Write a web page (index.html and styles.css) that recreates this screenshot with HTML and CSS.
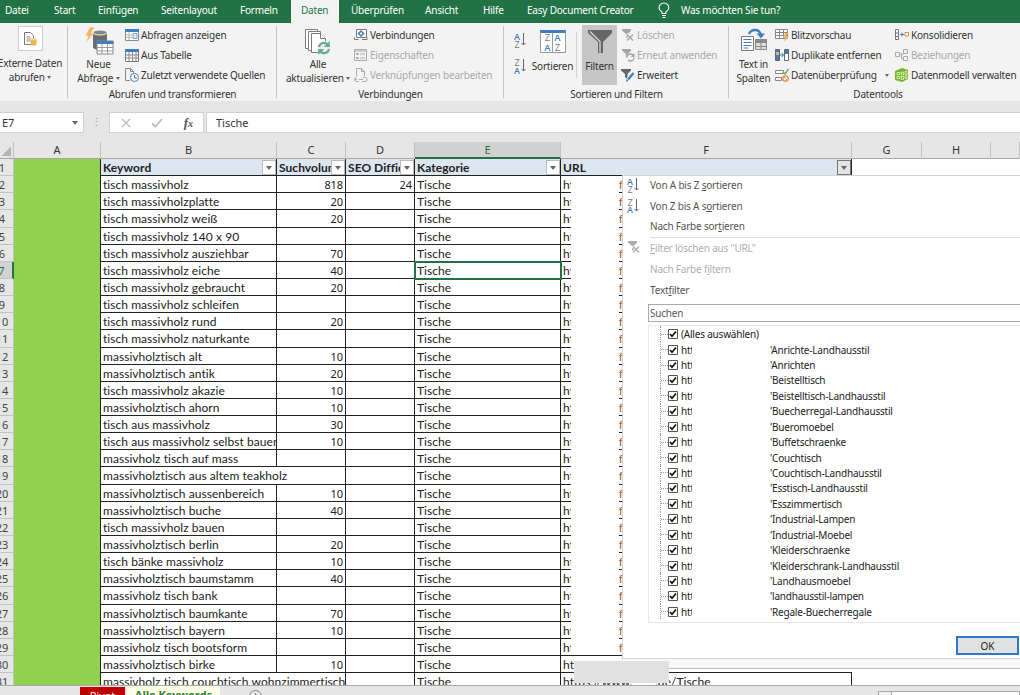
FILE: index.html
```html
<!DOCTYPE html>
<html lang="de">
<head>
    <meta charset="UTF-8">
    <meta name="viewport" content="width=device-width, initial-scale=1.0">
    <title>Alle Keywords</title>
    <link rel="stylesheet" href="styles.css">
</head>
<body>
    <nav class="tabs">
        <span>Datei</span>
        <span>Start</span>
        <span>Einfügen</span>
        <span>Seitenlayout</span>
        <span>Formeln</span>
        <span class="active">Daten</span>
        <span>Überprüfen</span>
        <span>Ansicht</span>
        <span>Hilfe</span>
        <span class="wide">Easy Document Creator</span>
        <svg width="12" height="17" viewBox="0 0 12 17" fill="none" stroke="#fff" stroke-width="1.1"><path d="M4 11.5V10C2 8.800 1 7.500 1 5.700a4.900 4.700 0 0 1 9.800 0C10.800 7.500 9.800 8.800 7.800 10v1.500zM4 13.500h4M4.500 15.500h3"/></svg>
        <span class="tell">Was möchten Sie tun?</span>
    </nav>

    <div class="ribbon">
        <section class="group g-extern">
            <div class="group-body">
                <div class="big">
                    <div class="framed"><svg width="13" height="14" viewBox="0 0 13 14"><path d="M.5.5h6l3 3v9h-9z" fill="#fff" stroke="#777"/><path d="M2.500 5h4M2.500 7h4M2.500 9h4" stroke="#888"/><path d="M6.500 7v5c0 2 6 2 6 0V7z" fill="#eeb45c"/><ellipse cx="9.500" cy="7" rx="3" ry="1.300" fill="#f7d49b"/></svg></div>
                    <div class="cap">Externe Daten<br>abrufen <i class="arrow"></i></div>
                </div>
            </div>
        </section>

        <section class="group g-abrufen">
            <div class="group-body">
                <div class="big">
                    <svg width="30" height="30" viewBox="0 0 30 30"><path d="M9 6v14c0 4 14 4 14 0V6z" fill="#6d6d6d"/><ellipse cx="16" cy="5.500" rx="7" ry="2.500" fill="#858585" stroke="#f3f3f3"/><path d="M6 0h5L7 6h3L2 16l2-7H1z" fill="#f0b765" stroke="#f3f3f3" stroke-width=".6"/><path d="M13 14h16v13H13z" fill="#fff" stroke="#8a8a8a"/><path d="M12.500 14h17v3h-17z" fill="#3f7fc1"/><path d="M13 20.500h16M13 24h16M18 17v10M23.500 17v10" stroke="#999"/></svg>
                    <div class="cap">Neue<br>Abfrage <i class="arrow"></i></div>
                </div>
                <ul class="smalls">
                    <li><svg width="14" height="14" viewBox="0 0 14 14"><path d="M.5 1.500h13v11H.5z" fill="#fff" stroke="#8a8a8a"/><path d="M0 1h14v3H0z" fill="#3f7fc1"/><path d="M1 7h6M1 9.500h6M4 4v8" stroke="#b5b5b5"/><path d="M8 5.500h4v5H8z" fill="#dce9f6" stroke="#7fa5cc"/></svg>Abfragen anzeigen</li>
                    <li><svg width="14" height="14" viewBox="0 0 14 14"><path d="M.5 1.500h13v12H.5z" fill="#fff" stroke="#777"/><path d="M0 1h14v3H0z" fill="#3f7fc1"/><path d="M1 7h12M1 10h12M4 4v9M7.500 4v9M11 4v9" stroke="#888"/></svg>Aus Tabelle</li>
                    <li><svg width="14" height="14" viewBox="0 0 14 14"><path d="M.5 12.500V.5h5l3 3V6M.5 12.500H5M5.500.5v3h3" fill="none" stroke="#888"/><circle cx="9.500" cy="9.500" r="4" fill="#fff" stroke="#3f7fc1"/><path d="M9.500 7v3H12" fill="none" stroke="#666"/></svg>Zuletzt verwendete Quellen</li>
                </ul>
            </div>
            <h2>Abrufen und transformieren</h2>
        </section>

        <section class="group g-verb">
            <div class="group-body">
                <div class="big">
                    <svg width="28" height="28" viewBox="0 0 28 28"><g fill="#fff" stroke="#7b7b7b"><path d="M1.500 20.500v-19h12v19z"/><path d="M4.500 22.500v-19h12v19z"/><path d="M7.500 24.500v-19h9l5 5v14z"/><path d="M16.500 5.500v5h5"/></g><circle cx="20" cy="20" r="7" fill="#f3f3f3"/><path d="M15 19a5 5 0 0 1 9-2M25 21a5 5 0 0 1-9 2" fill="none" stroke="#63ac8b" stroke-width="2.200"/><path d="M25.800 13v6h-6zM14.200 27v-6h6z" fill="#63ac8b"/></svg>
                    <div class="cap">Alle<br>aktualisieren <i class="arrow"></i></div>
                </div>
                <ul class="smalls">
                    <li><svg width="14" height="14" viewBox="0 0 14 14"><path d="M2.500 1.500h10v8h-10zM.5 9.500v2h4M8 11.500h5v-2" fill="#fff" stroke="#777"/><path d="M7 3l2.500 2.500L7 8 4.500 5.500z" fill="none" stroke="#3f7fc1" stroke-width="1.500"/></svg>Verbindungen</li>
                    <li class="off"><svg width="14" height="14" viewBox="0 0 14 14" fill="none" stroke="#aaa"><path d="M.5 1.500h12v11H.5zM1 3h11M2.500 5.500h2v1h-2zM2.500 9.500h2v1h-2zM6 6h5M6 10h5"/></svg>Eigenschaften</li>
                    <li class="off"><svg width="14" height="14" viewBox="0 0 14 14" fill="none" stroke="#aaa"><path d="M2.500 8V.5h5l3 3V8M7.500.5v3h3M1 11.500h2m2 0h4m-6-2H2.500a2 2 0 0 0 0 4H5m4-4h2a2 2 0 0 1 0 4H8"/></svg>Verknüpfungen bearbeiten</li>
                </ul>
            </div>
            <h2>Verbindungen</h2>
        </section>

        <section class="group g-sort">
            <div class="group-body">
                <div class="az">
                    <div class="az-icon"><span><b>A</b>Z</span><svg width="5" height="14" viewBox="0 0 5 14" fill="none" stroke="#666"><path d="M2.500 0v12M.5 10l2 2 2-2"/></svg></div>
                    <div class="az-icon"><span>Z<b>A</b></span><svg width="5" height="14" viewBox="0 0 5 14" fill="none" stroke="#666"><path d="M2.500 0v12M.5 10l2 2 2-2"/></svg></div>
                </div>
                <div class="big sort">
                    <div class="sort-icon"><span>Z<b>A</b></span><span><b>A</b>Z</span></div>
                    <div class="cap">Sortieren</div>
                </div>
                <div class="big filter">
                    <svg width="26" height="26" viewBox="0 0 26 26"><path d="M1 1h24v3l-9 9v11h-5V13L1 4z" fill="#666"/><path d="M3 2.500l10 10v11" fill="none" stroke="#d8d8d8" stroke-width="1.300"/></svg>
                    <div class="cap">Filtern</div>
                </div>
                <ul class="smalls">
                    <li class="off"><svg width="14" height="14" viewBox="0 0 14 14"><path d="M1 1h9v1.500L7 6v5L5 9V6L1 2.500z" fill="#a5a5a5"/><path d="M5.500 6l7 6.500M12.500 6l-7 6.500" stroke="#f3f3f3" stroke-width="3"/><path d="M6 6.500l6 6M12 6.500l-6 6" stroke="#a5a5a5" stroke-width="1.300"/></svg>Löschen</li>
                    <li class="off"><svg width="14" height="14" viewBox="0 0 14 14"><path d="M1 1h9v1.500L7 6v5L5 9V6L1 2.500z" fill="#a5a5a5"/><circle cx="9.500" cy="9.500" r="3.500" fill="#f3f3f3" stroke="#a5a5a5" stroke-width="1.300" stroke-dasharray="8 3"/><path d="M13.500 5v4h-4z" fill="#a5a5a5"/></svg>Erneut anwenden</li>
                    <li><svg width="14" height="14" viewBox="0 0 14 14"><path d="M0 1h10v1.500L6.500 6v6L4 9V6L0 2.500z" fill="#666"/><path d="M13 4.500L6.500 12" stroke="#f3f3f3" stroke-width="4"/><path d="M12.500 5L7 11.500" stroke="#3f7fc1" stroke-width="2.400"/><path d="M5 14l.5-3 2 1.700z" fill="#3f7fc1"/></svg>Erweitert</li>
                </ul>
            </div>
            <h2>Sortieren und Filtern</h2>
        </section>

        <section class="group g-tools">
            <div class="group-body">
                <div class="big">
                    <svg width="28" height="24" viewBox="0 0 28 24"><path d="M1.500 8.500h12v14h-12z" fill="#fff" stroke="#777"/><path d="M3.500 11.500h8M3.500 14.500h8M3.500 17.500h8M3.500 20h5" stroke="#3f7fc1"/><path d="M15.500 11.500h11v10h-11z" fill="#ddd" stroke="#888"/><path d="M15 11h12v4H15z" fill="#8a8a8a"/><path d="M15 18.500h11M21 15v7" stroke="#888"/><path d="M9 6c2-5 10-6 12 1" fill="none" stroke="#3f7fc1" stroke-width="2.300"/><path d="M16.500 5.500h8.500L21 10.500z" fill="#3f7fc1"/></svg>
                    <div class="cap">Text in<br>Spalten</div>
                </div>
                <ul class="smalls first">
                    <li><svg width="14" height="14" viewBox="0 0 14 14"><path d="M.5 1.500h12v9H.5zM1 4.500h11M1 7.500h11M4.500 2v8M8.500 2v8" fill="#fff" stroke="#888"/><path d="M10 5h3l-2 3h3l-5 6 1-4H8z" fill="#f0b765"/></svg>Blitzvorschau</li>
                    <li><svg width="14" height="14" viewBox="0 0 14 14"><path d="M.5 1.500h4v11h-4z" fill="#3f7fc1" stroke="#666"/><path d="M1 4h3v3H1z" fill="#e7b065"/><path d="M9.500 1.500h4v11h-4z" fill="#fff" stroke="#666"/><path d="M10 2h3v4h-3z" fill="#3f7fc1"/><path d="M4.500 7h4M7 5l1.500 2L7 9" fill="none" stroke="#3f7fc1"/></svg>Duplikate entfernen</li>
                    <li><svg width="14" height="14" viewBox="0 0 14 14"><path d="M.5 2.500h8v3h-8zM.5 9.500h6v3h-6z" fill="#fff" stroke="#888"/><path d="M8 4l2 2 3.500-5" fill="none" stroke="#63ac8b" stroke-width="1.500"/><circle cx="10.500" cy="10.500" r="2.700" fill="#fff" stroke="#e08b3c" stroke-width="1.300"/><path d="M8.500 8.500l4 4" stroke="#e08b3c"/></svg>Datenüberprüfung<i class="arrow far"></i></li>
                </ul>
                <ul class="smalls">
                    <li><svg width="14" height="14" viewBox="0 0 14 14"><path d="M.5 1.500h3v10h-3zM.5 5h3M.5 8.500h3" fill="#fff" stroke="#777"/><path d="M5 6.500h4M7 4.500v4" stroke="#3f7fc1"/><path d="M10 4.500h3.500v3.500H10z" fill="#fff" stroke="#e08b3c"/></svg>Konsolidieren</li>
                    <li class="off"><svg width="14" height="14" viewBox="0 0 14 14" fill="none" stroke="#aaa"><path d="M.5 4.500h4v4h-4zM8.500 1.500h4v4h-4zM8.500 8.500h4v4h-4zM5 6h3.500M6.500 6v5h2"/></svg>Beziehungen</li>
                    <li><svg width="14" height="14" viewBox="0 0 14 14"><path d="M0 3l7-3 6 2v9l-6 3-7-2z" fill="#76b82a"/><path d="M2 4.500h3v2H2zM6.500 4h2v3h-2zM10 3.500h2v3h-2zM2 8.500h3v2H2zM6.500 8.500h2v3h-2zM10 8h2v2.500h-2z" fill="none" stroke="#e5f4d1" stroke-width=".8"/></svg>Datenmodell verwalten</li>
                </ul>
            </div>
            <h2>Datentools</h2>
        </section>
    </div>

    <div class="formula">
        <div class="namebox">E7<i class="arrow"></i></div>
        <div class="dots">⋮</div>
        <div class="fx">
            <svg width="10" height="10" viewBox="0 0 10 10" stroke="#bbb" stroke-width="1.300"><path d="M1 1l8 8M9 1L1 9"/></svg>
            <svg width="12" height="10" viewBox="0 0 12 10" fill="none" stroke="#bbb" stroke-width="1.800"><path d="M1 5.500l3.500 3L11 1"/></svg>
            <em>f<small>x</small></em>
        </div>
        <div class="value">Tische</div>
    </div>

    <div class="colheads">
        <span class="corner"></span>
        <span>A</span><span>B</span><span>C</span><span>D</span><span class="sel">E</span><span>F</span><span>G</span><span>H</span><span></span>
    </div>

    <main class="sheet">
        <div class="rows" id="rows"></div>
        <div class="patch"></div>
        <div class="patch grey"></div>

        <div class="menu">
            <ul class="commands">
                <li><div class="az-icon"><span><b>A</b>Z</span><svg width="5" height="14" viewBox="0 0 5 14" fill="none" stroke="#666"><path d="M2.500 0v12M.5 10l2 2 2-2"/></svg></div><p>Von A bis Z <u>s</u>ortieren</p></li>
                <li><div class="az-icon"><span>Z<b>A</b></span><svg width="5" height="14" viewBox="0 0 5 14" fill="none" stroke="#666"><path d="M2.500 0v12M.5 10l2 2 2-2"/></svg></div><p>Von Z bis A s<u>o</u>rtieren</p></li>
                <li><i></i><p>Nach Farbe sor<u>t</u>ieren</p></li>
                <li class="off line"><svg width="14" height="14" viewBox="0 0 14 14"><path d="M1 1h9v1.500L7 6v6L5 10V6L1 2.500z" fill="#aaa"/><path d="M5.500 6l7 6.500M12.500 6l-7 6.500" stroke="#fff" stroke-width="3"/><path d="M6 6.500l6 6M12 6.500l-6 6" stroke="#aaa" stroke-width="1.300"/></svg><p><u>F</u>ilter löschen aus "URL"</p></li>
                <li class="off"><i></i><p>Nach Farbe f<u>i</u>ltern</p></li>
                <li><i></i><p>Text<u>f</u>ilter</p></li>
            </ul>
            <div class="search">Suchen</div>
            <div class="tree" id="tree"></div>
            <button class="ok">OK</button>
        </div>
    </main>

    <footer class="sheets">
        <span class="pivot">Pivot</span>
        <span class="current">Alle Keywords</span>
        <svg class="plus" width="13" height="13" viewBox="0 0 13 13" fill="none" stroke="#888"><circle cx="6.500" cy="6.500" r="6"/><path d="M6.500 3v7M3 6.500h7"/></svg>
        <span class="scroll"></span>
    </footer>

    <script src="script.js"></script>
</body>
</html>
```
FILE: styles.css
```css
* {
    margin: 0;
    padding: 0;
    box-sizing: border-box;
}

body {
    width: 1020px;
    height: 695px;
    overflow: hidden;
    display: flex;
    flex-direction: column;
    background: #e6e6e6;
    color: #333;
    font: 10px/14px "Noto Sans", "Open Sans", sans-serif;
    letter-spacing: -0.2px;
    white-space: nowrap;
}

ul {
    list-style: none;
}

svg {
    display: block;
    flex: none;
}

/* tabs */
.tabs {
    height: 23px;
    flex: none;
    display: grid;
    grid-template-columns: 49px 44px 63px 79px 56px 48px 74px 58px 44px 136px 25px 1fr;
    line-height: 20px;
    background: #217346;
    color: #fff;
}

.tabs span {
    padding-left: 5px;
}

.tabs .active {
    padding-left: 10px;
    background: #f3f3f3;
    color: #217346;
}

.tabs span.active ~ span {
    padding-left: 12px;
}

.tabs svg {
    margin: 2px 0 0 7px;
}

.tabs span.active ~ .tell {
    padding-left: 5px;
}

/* ribbon */
.ribbon {
    height: 78px;
    flex: none;
    display: flex;
    background: #f3f3f3;
}

.group {
    position: relative;
    flex: none;
    display: flex;
    flex-direction: column;
    height: 78px;
}

.group::after {
    content: "";
    position: absolute;
    right: 0;
    top: 3px;
    width: 1px;
    height: 72px;
    background: #c6c6c6;
}

.g-extern { width: 68px; }
.g-abrufen { width: 209px; }
.g-verb { width: 227px; }
.g-sort { width: 225px; }
.g-tools { width: 298px; }

.g-tools::after {
    display: none;
}

.group-body {
    height: 64px;
    flex: none;
    display: flex;
    padding-top: 2px;
}

.group h2 {
    font-size: 10px;
    font-weight: normal;
    line-height: 15px;
    text-align: center;
}

.big {
    flex: none;
    display: flex;
    flex-direction: column;
    align-items: center;
    height: 60px;
    padding-top: 3px;
    text-align: center;
}

.big .cap {
    margin-top: auto;
}

.g-extern .big { width: 60px; padding-top: 1px; }
.g-extern .cap { margin-bottom: 1px; }
.g-abrufen .big { width: 57px; padding-top: 2px; padding-left: 4px; }
.g-verb .big { width: 77px; padding-left: 5px; }
.g-tools .big { width: 46px; padding-left: 3px; }

.framed {
    width: 25px;
    height: 25px;
    display: grid;
    place-items: center;
    background: #fff;
    border: 1px solid #ccc;
}

.arrow {
    display: inline-block;
    vertical-align: 2px;
    border: 2.5px solid transparent;
    border-top: 3px solid #666;
    border-bottom: 0;
}

.smalls li {
    display: flex;
    align-items: center;
    gap: 2px;
    height: 20px;
    line-height: 20px;
}

.smalls .off {
    color: #a9a9a9;
}

.first {
    width: 120px;
}

.arrow.far {
    margin-left: 6px;
}

.az {
    width: 24px;
    padding: 8px 0 0 10px;
}

.az-icon {
    display: flex;
    gap: 1px;
    height: 26px;
    color: #777;
    font: 9px/7.500px "Open Sans", sans-serif;
    letter-spacing: 0;
}

.az-icon span,
.sort-icon span {
    width: 6px;
    display: flex;
    flex-direction: column;
    align-items: center;
}

.az-icon b,
.sort-icon b {
    font-weight: 600;
    color: #3f7fc1;
}

.big.sort {
    position: relative;
    width: 49px;
}

.big.sort::after {
    content: "";
    position: absolute;
    right: 0;
    top: 7px;
    width: 1px;
    height: 46px;
    background: #d5d5d5;
}

.sort-icon {
    display: flex;
    justify-content: space-evenly;
    width: 26px;
    height: 23px;
    margin-top: 2px;
    background: linear-gradient(#999, #999) 50% 0 / 1px 100% no-repeat #fff;
    border: 1px solid #999;
    border-top: 3px solid #3f7fc1;
    font: 9.500px/9.500px "Open Sans", sans-serif;
    letter-spacing: 0;
    color: #777;
}

.big.sort .cap,
.big.filter .cap {
    margin: auto 0 12px;
}

.big.filter {
    width: 35px;
    margin-left: 5px;
    padding-top: 4px;
    background: #c6c6c6;
}

.g-sort .smalls {
    margin-left: 4px;
}

/* formula bar */
.formula {
    height: 21px;
    flex: none;
    display: flex;
    margin-top: 11px;
    font-size: 11px;
    line-height: 19px;
    letter-spacing: 0;
}

.namebox,
.fx,
.value {
    display: flex;
    align-items: center;
    background: #fff;
    border: 1px solid #d0d0d0;
}

.namebox {
    width: 84px;
    padding: 0 5px 0 2px;
    border-left: 0;
    justify-content: space-between;
}

.namebox .arrow {
    border-width: 4px 3px 0;
}

.dots {
    width: 25px;
    text-align: center;
    color: #999;
}

.fx {
    width: 95px;
    justify-content: space-between;
    padding: 0 10px 0 11px;
}

.fx em {
    font: italic bold 13px "Liberation Serif", serif;
    color: #555;
}

.fx small {
    font-size: 10px;
}

.value {
    flex: 1;
    margin-left: 2px;
    padding-left: 9px;
    border-right: 0;
}

/* column heads */
.colheads,
.row {
    display: grid;
    grid-template-columns: 14px 87px 176px 69px 69px 146px 291px 70px 69px 29px;
}

.colheads {
    height: 17px;
    flex: none;
    margin-top: 9px;
    font-size: 11px;
    line-height: 16px;
    text-align: center;
    border-bottom: 1px solid #a6a6a6;
}

.colheads span {
    border-right: 1px solid #c2c2c2;
}

.colheads .corner {
    background: linear-gradient(135deg, transparent 50%, #b4b4b4 50%) 2px 5px / 9px 9px no-repeat;
}

.colheads .sel {
    height: 17px;
    background: #d2d2d2;
    color: #217346;
    border-bottom: 2px solid #217346;
}

/* sheet */
.sheet {
    position: relative;
    height: 526px;
    flex: none;
    overflow: hidden;
    background: #fff;
}

.rows {
    height: 531.3px;
    display: grid;
    grid-template-rows: repeat(31, minmax(0, 1fr));
    font: 12px/16px Lato, "Open Sans", sans-serif;
    letter-spacing: 0.05px;
    color: #222;
}

.row {
    grid-template-rows: 100%;
}

.row > span {
    min-width: 0;
    overflow: hidden;
    padding: 1px 2px 0;
    border-right: 1px solid #222;
    border-bottom: 1px solid #222;
}

.row > .num {
    margin-left: -9px;
    padding: 0;
    text-align: center;
    background: #e6e6e6;
    border-color: #c2c2c2;
    font: 11px/17px "Noto Sans", sans-serif;
    letter-spacing: 0;
    color: #444;
}

.row > .green {
    background: #92d050;
    border-bottom: 0;
}

.row > .right {
    text-align: right;
    font: 11px/16px "Noto Sans", sans-serif;
    letter-spacing: -0.1px;
}

.row > .spill {
    overflow: visible;
    border-right: 0;
}

.row > .url {
    border-right: 0;
    display: flex;
    justify-content: space-between;
    padding-right: 229px;
}

.row > .url b {
    font-weight: normal;
    color: #a0622d;
}

.row.last > .url {
    border-right: 1px solid #222;
    padding-right: 0;
}

.row.head > span {
    position: relative;
    font-weight: bold;
}

.row.head > .cell {
    background: #dce6f1;
}

.row.head > .num {
    font-weight: normal;
}

.row.head .url {
    border-right: 1px solid #222;
}

.drop {
    position: absolute;
    right: 0;
    top: 1px;
    width: 14px;
    height: 15px;
    display: grid;
    place-items: center;
    background: #fff;
    border: 1px solid #bbb;
}

.drop .arrow {
    border-width: 4px 3px 0;
}

.row.head .url .drop {
    background: #e4e4e4;
    border-color: #777;
}

.row.picked > .num {
    background: #d2d2d2;
    color: #217346;
    border-right: 2px solid #217346;
}

.row.picked > .kat {
    outline: 2px solid #217346;
    outline-offset: -1px;
    z-index: 1;
}

.patch {
    position: absolute;
    left: 571px;
    top: 18px;
    width: 48px;
    height: 477px;
    background: #fff;
}

.patch.grey {
    z-index: 2;
    left: 574px;
    top: 502px;
    width: 95px;
    height: 22px;
    background: #e1e1e1;
}

/* filter menu */
.menu {
    position: absolute;
    z-index: 1;
    left: 622px;
    top: 16px;
    width: 420px;
    height: 484px;
    padding: 0 0 0 25px;
    background: #fff;
    border: 1px solid #d4d4d4;
    box-shadow: 0 9px 0 #f7f7f7, 0 10px 0 #bbb;
    color: #555;
}

.commands {
    margin: -1px 0 0 -25px;
}

.commands li {
    display: grid;
    grid-template-columns: 27px 1fr;
    height: 20.6px;
    line-height: 20px;
}

.commands li > svg,
.commands .az-icon {
    margin: 3px 0 0 4px;
}

.commands .az-icon {
    height: 14px;
}

.commands .line p {
    border-top: 1px solid #e1e1e1;
    line-height: 21px;
}

.commands .line {
    height: 22.5px;
}

.commands .off {
    color: #aeaeae;
}

.commands u {
    text-underline-offset: 1px;
}

.search {
    height: 18px;
    margin-top: 4px;
    padding-left: 1px;
    line-height: 17px;
    border: 1px solid #aaa;
}

.tree {
    height: 298px;
    margin-top: 3px;
    padding-left: 11px;
    border: 1px solid #e8e8e8;
    color: #222;
}

.node {
    display: flex;
    align-items: center;
    height: 15.430px;
    border-left: 1px dotted #999;
}

.node::before {
    content: "";
    width: 7px;
    border-top: 1px dotted #999;
}

.node svg {
    margin-right: 3px;
}

.node span {
    width: 11px;
    overflow: hidden;
    margin-right: 78px;
}

.ok {
    display: block;
    width: 63px;
    height: 19px;
    margin: 13px 0 0 308px;
    background: #e1e1e1;
    border: 2px solid #2f78c4;
    font: inherit;
    color: #222;
}

/* sheet tabs */
.sheets {
    height: 10px;
    display: flex;
    overflow: hidden;
    padding-left: 80px;
    border-top: 1px solid #aaa;
    font: bold 11px/18px "Open Sans", sans-serif;
    letter-spacing: 0;
}

.pivot {
    width: 45px;
    height: 18px;
    margin-top: 1px;
    text-align: center;
    background: #c00000;
    color: #fff;
    font-weight: normal;
}

.current {
    width: 93px;
    margin-left: 2px;
    text-align: center;
    background: #ffffe5;
    color: #2b7d34;
}

.plus {
    margin: 4px 0 0 29px;
}

.scroll {
    height: 12px;
    margin: 5px 0 0 616px;
    width: 142px;
    flex: none;
    background: linear-gradient(90deg, #f3f3f3 12px, #aaa 12px, #aaa 13px, #fff 13px);
    border: 1px solid #aaa;
}
```
FILE: script.js
```js
// keyword, search volume, seo difficulty
const keywords = [
    ["tisch massivholz", 818, 24],
    ["tisch massivholzplatte", 20],
    ["tisch massivholz weiß", 20],
    ["tisch massivholz 140 x 90"],
    ["tisch massivholz ausziehbar", 70],
    ["tisch massivholz eiche", 40],
    ["tisch massivholz gebraucht", 20],
    ["tisch massivholz schleifen"],
    ["tisch massivholz rund", 20],
    ["tisch massivholz naturkante"],
    ["massivholztisch alt", 10],
    ["massivholztisch antik", 20],
    ["tisch massivholz akazie", 10],
    ["massivholztisch ahorn", 10],
    ["tisch aus massivholz", 30],
    ["tisch aus massivholz selbst bauen", 10],
    ["massivholz tisch auf mass"],
    ["massivholztisch aus altem teakholz"],
    ["massivholztisch aussenbereich", 10],
    ["massivholztisch buche", 40],
    ["tisch massivholz bauen"],
    ["massivholztisch berlin", 20],
    ["tisch bänke massivholz", 10],
    ["massivholztisch baumstamm", 40],
    ["massivholz tisch bank"],
    ["massivholztisch baumkante", 70],
    ["massivholztisch bayern", 10],
    ["massivholz tisch bootsform"],
    ["massivholztisch birke", 10],
    ["massivholz tisch couchtisch wohnzimmertisch"]
];

const drop = '<i class="drop"><i class="arrow"></i></i>';
let html = `<div class="row head"><span class="num">1</span><span class="green"></span>
    <span class="cell">Keyword${drop}</span><span class="cell">Suchvolumen${drop}</span>
    <span class="cell">SEO Difficulty${drop}</span><span class="cell">Kategorie${drop}</span>
    <span class="cell url">URL${drop}</span></div>`;

keywords.forEach(([word, volume = "", seo = ""], i) => {
    const n = i + 2;
    const spill = n === 19 || n === 31 ? "spill" : "";
    let url = "ht <b>.f</b>";
    if (n === 30) url = "ht";
    if (n === 31) url = "https://www.____.de/Tische";
    html += `<div class="row ${n === 7 ? "picked" : ""} ${n === 31 ? "last" : ""}">
        <span class="num">${n}</span><span class="green"></span>
        <span class="word ${spill}">${word}</span><span class="right">${volume}</span>
        <span class="right">${seo}</span><span class="kat">Tische</span><span class="url">${url}</span></div>`;
});
document.getElementById("rows").innerHTML = html;

const pages = ["Anrichte-Landhausstil", "Anrichten", "Beistelltisch", "Beistelltisch-Landhausstil",
    "Buecherregal-Landhausstil", "Bueromoebel", "Buffetschraenke", "Couchtisch", "Couchtisch-Landhausstil",
    "Esstisch-Landhausstil", "Esszimmertisch", "Industrial-Lampen", "Industrial-Moebel", "Kleiderschraenke",
    "Kleiderschrank-Landhausstil", "Landhausmoebel", "landhausstil-lampen", "Regale-Buecherregale"];
const check = '<svg width="10" height="10" viewBox="0 0 10 10" fill="none"><path d="M.5.5h9v9h-9z" fill="#fff" stroke="#555"/><path d="M2 5l2 2.300L8 2.500" stroke="#111" stroke-width="1.700"/></svg>';

document.getElementById("tree").innerHTML =
    `<div class="node">${check}(Alles auswählen)</div>` +
    pages.map(p => `<div class="node">${check}<span>http</span>'${p}</div>`).join("");
```
